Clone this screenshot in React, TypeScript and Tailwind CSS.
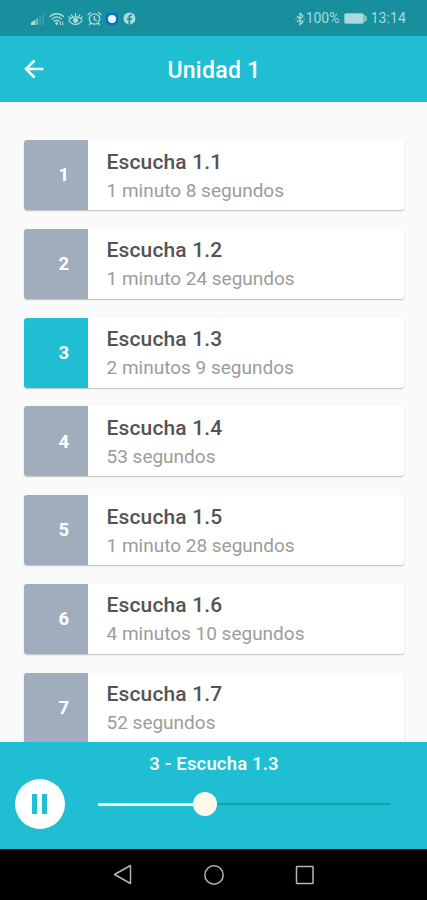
import { useState } from 'react'

type Track = {
  id: number
  title: string
  duration: string
}

const tracks: Track[] = [
  { id: 1, title: 'Escucha 1.1', duration: '1 minuto 8 segundos' },
  { id: 2, title: 'Escucha 1.2', duration: '1 minuto 24 segundos' },
  { id: 3, title: 'Escucha 1.3', duration: '2 minutos 9 segundos' },
  { id: 4, title: 'Escucha 1.4', duration: '53 segundos' },
  { id: 5, title: 'Escucha 1.5', duration: '1 minuto 28 segundos' },
  { id: 6, title: 'Escucha 1.6', duration: '4 minutos 10 segundos' },
  { id: 7, title: 'Escucha 1.7', duration: '52 segundos' },
]

function StatusBar() {
  return (
    <div className="flex h-9 shrink-0 items-center bg-[#178f9c] pl-[30px] pr-[21px] pt-px text-[#a9dadd]">
      <div className="flex flex-1 items-center">
        {/* signal */}
        <svg width="16" height="14" viewBox="0 0 16 14" fill="currentColor">
          <path d="M1 13v-2.500l4-2.500v5z" />
          <path d="M5.500 13V7.500l2.500-1.500v7z" opacity=".6" />
          <path d="M9 13V5l2-1.500V13zM12 13V3l2-1.500V13z" opacity=".22" />
        </svg>
        {/* wifi */}
        <svg className="ml-[3px]" width="16" height="14" viewBox="0 0 16 14" fill="none" stroke="currentColor" strokeWidth="1.300" strokeLinecap="round">
          <path d="M1 4.500C4.500 .8 11 .8 14.500 4.500M3.200 7c2.700-2.700 6.400-2.700 9.100 0M5.300 9.300c1.400-1.400 3.400-1.400 4.800 0" />
          <circle cx="7.700" cy="11.500" r=".8" fill="currentColor" />
          <path d="M11.500 10v3M13.800 10v3" strokeWidth="1" />
        </svg>
        {/* eye comfort */}
        <svg className="ml-[3px]" width="15" height="14" viewBox="0 0 15 14" fill="none" stroke="currentColor" strokeWidth="1.200" strokeLinecap="round">
          <path d="M1 8.200C3.800 3.700 11.200 3.700 14 8.200 11.200 13.700 3.800 13.700 1 8.200z" />
          <circle cx="7.500" cy="8.300" r="2" fill="currentColor" />
          <path d="M7.500 1.500v3M3.200 2.700l1.300 2.200M11.800 2.700l-1.300 2.200M.8 5l1.200 1M14.200 5l-1.200 1" />
        </svg>
        {/* alarm */}
        <svg className="ml-1" width="15" height="15" viewBox="0 0 15 15" fill="none" stroke="currentColor" strokeWidth="1.300" strokeLinecap="round">
          <circle cx="7.500" cy="8" r="5.200" />
          <path d="M7.300 5.300v3l2 1.200M1 3.800l2.500-2.200M14 3.800l-2.500-2.200M3.500 12.500l-1 1.200M11.500 12.500l1 1.200" />
        </svg>
        <div className="ml-1 flex size-3 items-center justify-center rounded-[3px] bg-[#086fc4]">
          <div className="size-2 rounded-full bg-[#f0faff]" />
        </div>
        {/* facebook */}
        <svg className="ml-[5px]" width="13" height="13" viewBox="0 0 13 13">
          <circle cx="6.500" cy="6.500" r="6" fill="currentColor" />
          <path d="M5.500 12.500V8H4V6.200h1.500V5c0-1.700 1-2.500 2.300-2.500h1.200v1.600h-.9c-.6 0-.9.300-.9.900v1.200h1.700L8.600 8H7.200v4.500z" fill="#178f9c" />
        </svg>
      </div>
      <svg width="10" height="14" viewBox="0 0 10 14" fill="none" stroke="currentColor" strokeWidth="1.200" strokeLinejoin="round">
        <path d="M2 4l6 6-3 2.800V1.200L8 4l-6 6" />
        <path d="M.4 7h1.200M8.400 7h1.200" />
      </svg>
      <span className="ml-px w-[38px] whitespace-nowrap text-[14px]">100%</span>
      <div className="h-[11px] w-[20px] rounded-[2px] border border-[#7cc2c7] bg-[#a9dadd]" />
      <div className="h-[7px] w-[3px] rounded-r-sm bg-[#7cc2c7]" />
      <span className="ml-1 text-[14px] tracking-[0.1px]">13:14</span>
    </div>
  )
}

function TrackCard({ track, active, onSelect }: { track: Track; active: boolean; onSelect: () => void }) {
  return (
    <button
      onClick={onSelect}
      className="flex h-[70px] w-full shrink-0 overflow-hidden rounded-[3px] bg-white text-left shadow-[0_1px_1.5px_rgba(0,0,0,0.24)]"
    >
      <span
        className={`flex h-full w-[63.5px] shrink-0 items-center justify-end pr-[18.500px] pt-0.5 text-[18.500px] font-bold text-white ${
          active ? 'bg-[#1fbed3]' : 'bg-[#9fadbd]'
        }`}
      >
        {track.id}
      </span>
      <span className="flex flex-col pl-[19px] pt-[7.500px]">
        <span className="text-[21px] font-medium leading-[29px] tracking-[0.15px] text-[#545454]">{track.title}</span>
        <span className="text-[19px] leading-[28px] text-[#9c9c9c]">{track.duration}</span>
      </span>
    </button>
  )
}

export default function App() {
  const [current, setCurrent] = useState(3)
  const [playing, setPlaying] = useState(true)
  const track = tracks[current - 1]

  return (
    <div className="flex h-[900px] w-[427px] flex-col overflow-hidden bg-[#fafafa] font-[Roboto,sans-serif]">
      <StatusBar />

      <header className="flex h-[66px] shrink-0 items-center bg-[#1fbed3] px-6 text-white">
        <button className="w-10" aria-label="Volver">
          <svg width="20" height="20" viewBox="0 0 20 20" fill="none" stroke="currentColor" strokeWidth="2.500">
            <path d="M19.500 10H2M10.500 1.500L2 10l8.500 8.500" />
          </svg>
        </button>
        <h1 className="flex-1 pl-px pt-1 text-center text-[23px] font-medium tracking-[0.3px]">Unidad 1</h1>
        <div className="w-10" />
      </header>

      <main className="flex min-h-0 flex-1 flex-col gap-[18.800px] overflow-hidden pl-6 pr-[23px] pt-[38px]">
        {tracks.map((t) => (
          <TrackCard key={t.id} track={t} active={t.id === current} onSelect={() => setCurrent(t.id)} />
        ))}
      </main>

      <footer className="h-[107px] shrink-0 bg-[#1fbed3] pt-2">
        <p className="pl-px pt-px text-center text-[18.500px] font-semibold leading-[26px] tracking-[0.15px] text-[#edfcfd]">
          {track.id} - {track.title}
        </p>
        <div className="flex items-center pl-[15px] pr-9 pt-0.5">
          <button
            onClick={() => setPlaying((p) => !p)}
            aria-label={playing ? 'Pausar' : 'Reproducir'}
            className="flex size-[50px] items-center justify-center rounded-full bg-white text-[#1fbed3]"
          >
            <svg width="20" height="20" viewBox="0 0 20 20" fill="currentColor">
              {playing ? <path d="M2 0h5v20H2zM12 0h5v20h-5z" /> : <path d="M4 0l14 10L4 20z" />}
            </svg>
          </button>
          {/* slider */}
          <div className="ml-[33px] flex flex-1 items-center">
            <div className="h-[3px] w-[95px] rounded-l-full bg-[#effbfc]" />
            <div className="size-6 rounded-full bg-[#fff8ec]" />
            <div className="h-[2px] flex-1 rounded-r-full bg-[#179fb0]" />
          </div>
        </div>
      </footer>

      <nav className="flex h-[51px] shrink-0 items-center justify-center gap-[71px] bg-black text-[#b5b5b5]">
        <svg width="20" height="22" viewBox="0 0 20 22" fill="none" stroke="currentColor" strokeWidth="1.500" strokeLinejoin="round">
          <path d="M17.500 1.500v18L1.500 10.500z" />
        </svg>
        <svg width="20" height="20" viewBox="0 0 20 20" fill="none" stroke="currentColor" strokeWidth="1.500">
          <circle cx="10" cy="10" r="9.200" />
        </svg>
        <svg width="20" height="20" viewBox="0 0 20 20" fill="none" stroke="currentColor" strokeWidth="1.500" strokeLinejoin="round">
          <rect x="1.500" y="1.500" width="16.500" height="17" rx=".5" />
        </svg>
      </nav>
    </div>
  )
}
